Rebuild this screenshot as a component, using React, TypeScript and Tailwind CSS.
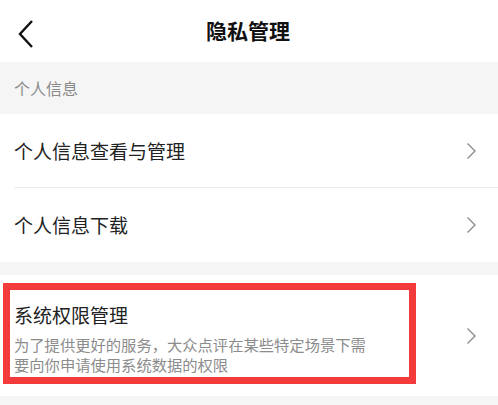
import React from "react";

function Chevron() {
  return (
    <svg width="12" height="18" viewBox="0 0 12 18" className="shrink-0">
      <path d="M2.5 1.5 L10 9 L2.5 16.5" fill="none" stroke="#8c8c8c" strokeWidth="1.4" />
    </svg>
  );
}

function Row({ title, border }: { title: string; border?: boolean }) {
  return (
    <div className="bg-white pl-[14px]">
      <div className={`flex items-center justify-between h-[74px] pr-[21px] ${border ? "border-b border-[#ededed]" : ""}`}>
        <span className="text-[19px] text-[#222] mt-[1px]">{title}</span>
        <Chevron />
      </div>
    </div>
  );
}

export default function App() {
  return (
    <div className="min-h-screen bg-[#f5f5f5]" style={{ fontFamily: '"Noto Sans CJK SC", "Noto Sans", sans-serif' }}>
      <div className="relative h-[62px] bg-white flex items-center justify-center">
        <svg width="18" height="30" viewBox="0 0 18 30" className="absolute left-[17px] top-[19px]">
          <path d="M15 2 L3 15 L15 28" fill="none" stroke="#111" strokeWidth="2.4" />
        </svg>
        <span className="text-[21px] font-bold text-[#111] ml-[-2px]">隐私管理</span>
      </div>

      <div className="h-[52px] flex items-center px-[14px] text-[16px] text-[#8a8a8a]">个人信息</div>

      <Row title="个人信息查看与管理" border />
      <Row title="个人信息下载" />

      <div className="h-[13px]" />

      <div className="relative bg-white h-[121px] pl-[14px] pr-[21px] flex items-center justify-between">
        <div className="flex flex-col mt-[4px]">
          <span className="text-[19px] text-[#222] leading-[26px]">系统权限管理</span>
          <span className="mt-[6px] text-[15.3px] leading-[20px] text-[#8c8c8c] w-[360px]">
            为了提供更好的服务，大众点评在某些特定场景下需要向你申请使用系统数据的权限
          </span>
        </div>
        <Chevron />
        <div className="absolute left-[3px] top-[8px] w-[413px] h-[101px] border-[7px] border-[#f43b3b] pointer-events-none" />
      </div>
    </div>
  );
}
